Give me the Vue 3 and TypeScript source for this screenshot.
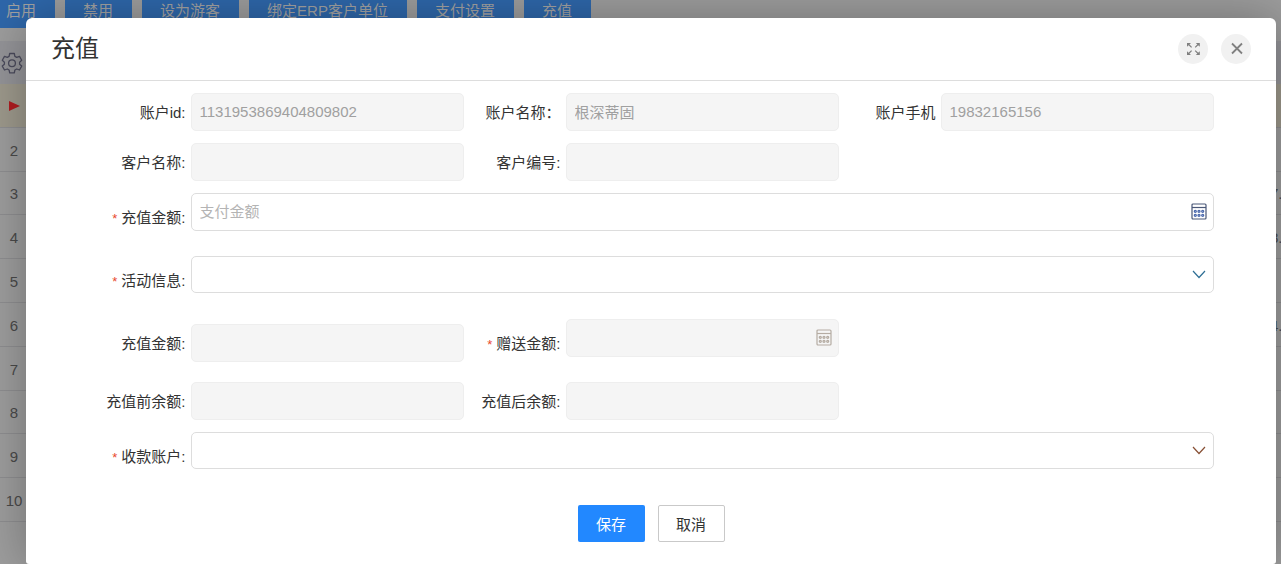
<script setup lang="ts">
import { reactive } from 'vue'

interface LedgerRow {
  index: number
  tail: string
}

const actions: string[] = ['启用', '禁用', '设为游客', '绑定ERP客户单位', '支付设置', '充值']

const tails: Record<number, string> = { 3: '7.', 4: '8.', 6: '4.' }

const rows: LedgerRow[] = [1, 2, 3, 4, 5, 6, 7, 8, 9, 10].map((index) => ({
  index,
  tail: tails[index] ?? '',
}))

const form = reactive({
  accountId: '1131953869404809802',
  accountName: '根深蒂固',
  phone: '19832165156',
  customerName: '',
  customerCode: '',
  payAmount: '',
  activity: '',
  rechargeAmount: '',
  giftAmount: '',
  balanceBefore: '',
  balanceAfter: '',
  payee: '',
})
</script>

<template>
  <div class="screen">
    <div class="backdrop" aria-hidden="true">
      <div class="toolbar">
        <button v-for="name in actions" :key="name" type="button" class="action" tabindex="-1">{{ name }}</button>
      </div>
      <div class="ledger">
        <div class="ledger-head">
          <svg class="gear" viewBox="0 0 22 22">
            <path d="M8.7 1.5h4.6l.6 2.9 1.8 1 2.8-1 2.2 3.9-2.1 1.9v2l2.1 1.9-2.2 3.9-2.8-1-1.8 1-.6 2.8H8.7l-.6-2.8-1.8-1-2.8 1-2.2-3.9 2.1-1.9v-2L1.3 8.3l2.2-3.9 2.8 1 1.8-1z" />
            <circle cx="11" cy="11.2" r="3.4" />
          </svg>
        </div>
        <div class="ledger-body">
          <div v-for="row in rows" :key="row.index" class="ledger-row" :class="{ current: row.index === 1 }">
            <span class="row-mark">
              <svg v-if="row.index === 1" class="pointer" viewBox="0 0 11 10"><path d="M0 0l11 5-11 5z" /></svg>
              <template v-else>{{ row.index }}</template>
            </span>
            <span class="row-tail">{{ row.tail }}</span>
          </div>
        </div>
      </div>
    </div>

    <section class="dialog" role="dialog" aria-labelledby="dialog-title">
      <header class="dialog-head">
        <h1 id="dialog-title">充值</h1>
        <div class="window-tools">
          <button type="button" class="round" aria-label="最大化">
            <svg class="tool-icon" viewBox="0 0 14 14">
              <path class="solid" d="M1 1h4L1 4.800zM13.800 1v3.800L9.800 1zM1 13V9.200L5 13zM13.800 13h-4l4-3.800z" />
              <path d="M2.200 2l3.400 3.400M12.600 2L9.200 5.400M2.200 12l3.400-3.400M12.600 12L9.200 8.600" />
            </svg>
          </button>
          <button type="button" class="round" aria-label="关闭">
            <svg class="tool-icon" viewBox="0 0 14 14"><path class="cross" d="M3 1.500l10 10M13 1.500l-10 10" /></svg>
          </button>
        </div>
      </header>

      <form class="form" @submit.prevent>
        <div class="row">
          <div class="cell">
            <label for="account-id">账户id:</label>
            <div class="control"><input id="account-id" v-model="form.accountId" type="text" disabled /></div>
          </div>
          <div class="cell">
            <label for="account-name">账户名称：</label>
            <div class="control"><input id="account-name" v-model="form.accountName" type="text" disabled /></div>
          </div>
          <div class="cell">
            <label for="phone">账户手机</label>
            <div class="control"><input id="phone" v-model="form.phone" type="text" disabled /></div>
          </div>
        </div>

        <div class="row">
          <div class="cell">
            <label for="customer-name">客户名称:</label>
            <div class="control"><input id="customer-name" v-model="form.customerName" type="text" disabled /></div>
          </div>
          <div class="cell">
            <label for="customer-code">客户编号:</label>
            <div class="control"><input id="customer-code" v-model="form.customerCode" type="text" disabled /></div>
          </div>
        </div>

        <div class="row">
          <div class="cell wide required">
            <label for="pay-amount"><i>*</i>充值金额:</label>
            <div class="control">
              <input id="pay-amount" v-model="form.payAmount" type="text" placeholder="支付金额" />
              <svg class="calc" viewBox="0 0 16 17">
                <rect x="1" y="1" width="14" height="15" rx="1" />
                <path d="M1 4.5h14" />
                <g class="keys">
                  <circle cx="4.300" cy="8.300" r="1" /><circle cx="8" cy="8.300" r="1" /><circle cx="11.700" cy="8.300" r="1" />
                  <circle cx="4.300" cy="12.300" r="1" /><circle cx="8" cy="12.300" r="1" /><circle cx="11.700" cy="12.300" r="1" />
                </g>
              </svg>
            </div>
          </div>
        </div>

        <div class="row spaced">
          <div class="cell wide required">
            <label for="activity"><i>*</i>活动信息:</label>
            <div class="control">
              <select id="activity" v-model="form.activity"><option value=""></option></select>
              <svg class="chevron" viewBox="0 0 14 9"><path d="M1 1l6 6.5L13 1" /></svg>
            </div>
          </div>
        </div>

        <div class="row spaced">
          <div class="cell low">
            <label for="recharge-amount">充值金额:</label>
            <div class="control"><input id="recharge-amount" v-model="form.rechargeAmount" type="text" disabled /></div>
          </div>
          <div class="cell required">
            <label for="gift-amount"><i>*</i>赠送金额:</label>
            <div class="control">
              <input id="gift-amount" v-model="form.giftAmount" type="text" disabled />
              <svg class="calc muted" viewBox="0 0 16 17">
                <rect x="1" y="1" width="14" height="15" rx="1" />
                <path d="M1 4.5h14" />
                <g class="keys">
                  <circle cx="4.300" cy="8.300" r="1" /><circle cx="8" cy="8.300" r="1" /><circle cx="11.700" cy="8.300" r="1" />
                  <circle cx="4.300" cy="12.300" r="1" /><circle cx="8" cy="12.300" r="1" /><circle cx="11.700" cy="12.300" r="1" />
                </g>
              </svg>
            </div>
          </div>
        </div>

        <div class="row spaced">
          <div class="cell">
            <label for="balance-before">充值前余额:</label>
            <div class="control"><input id="balance-before" v-model="form.balanceBefore" type="text" disabled /></div>
          </div>
          <div class="cell">
            <label for="balance-after">充值后余额:</label>
            <div class="control"><input id="balance-after" v-model="form.balanceAfter" type="text" disabled /></div>
          </div>
        </div>

        <div class="row">
          <div class="cell wide required">
            <label for="payee"><i>*</i>收款账户:</label>
            <div class="control">
              <select id="payee" v-model="form.payee"><option value=""></option></select>
              <svg class="chevron warm" viewBox="0 0 14 9"><path d="M1 1l6 6.5L13 1" /></svg>
            </div>
          </div>
        </div>

        <div class="buttons">
          <button type="submit" class="save">保存</button>
          <button type="button" class="cancel">取消</button>
        </div>
      </form>
    </section>
  </div>
</template>

<style>
body {
  margin: 0;
  overflow: hidden;
}
</style>

<style scoped>
.screen {
  position: relative;
  height: 100vh;
  overflow: hidden;
  background: #9d9d9d;
  font-family: "Liberation Sans", "Noto Sans CJK SC", sans-serif;
  font-size: 15px;
  color: #333;
}
button,
input,
select {
  box-sizing: border-box;
  font: inherit;
}
.backdrop {
  position: absolute;
  inset: 0;
}
.toolbar {
  display: flex;
  gap: 10px;
  height: 28px;
  margin-left: -12px;
}
.action {
  flex: none;
  height: 28px;
  padding: 0 19px 6px 18px;
  border: 0;
  background: #2e67aa;
  color: #a3a3a3;
  line-height: 22px;
}
.ledger {
  margin-top: 13px;
}
.ledger-head {
  display: flex;
  align-items: center;
  height: 43px;
  background: #949498;
}
.gear {
  width: 22px;
  height: 22px;
  margin-left: 1px;
  fill: none;
  stroke: #4b4b5c;
  stroke-width: 1.3;
  stroke-linejoin: round;
}
.ledger-body {
  display: grid;
  grid-template-rows: repeat(10, 1fr);
  height: 438px;
}
.ledger-row {
  display: flex;
  align-items: center;
  justify-content: space-between;
  padding-top: 2px;
  border-bottom: 1px solid #8e8e90;
  color: #4a4a4a;
}
.ledger-row.current {
  background: #9d998c;
}
.row-mark {
  width: 28px;
  text-align: center;
}
.row-tail {
  width: 11px;
  white-space: nowrap;
}
.pointer {
  display: block;
  width: 11px;
  height: 10px;
  margin-left: 9px;
  fill: #b01c20;
}
.dialog {
  position: absolute;
  top: 18px;
  right: 5px;
  bottom: 0;
  left: 26px;
  border-radius: 6px 6px 3px 3px;
  background: #fff;
  box-shadow: 1px 1px 50px rgba(0, 0, 0, 0.3);
}
.dialog-head {
  display: flex;
  align-items: center;
  justify-content: space-between;
  height: 62px;
  padding: 0 25px;
  border-bottom: 1px solid #ddd;
}
h1 {
  margin: 0;
  font-size: 24px;
  font-weight: 400;
  line-height: 32px;
}
.window-tools {
  display: flex;
  gap: 13px;
}
.round {
  display: flex;
  align-items: center;
  justify-content: center;
  width: 30px;
  height: 30px;
  padding: 0;
  border: 0;
  border-radius: 50%;
  background: #f1f1f1;
}
.tool-icon {
  width: 14px;
  height: 14px;
  fill: none;
  stroke: #808080;
  stroke-width: 1.2;
}
.tool-icon .solid {
  fill: #808080;
  stroke: none;
}
.tool-icon .cross {
  stroke-width: 1.8;
}
.form {
  display: flex;
  flex-direction: column;
  gap: 10px;
  padding: 12px 5% 0;
}
.row {
  display: grid;
  grid-template-columns: repeat(3, 1fr);
  align-items: start;
}
.row.spaced {
  margin-top: 8px;
}
.cell {
  display: flex;
  align-items: flex-start;
  gap: 5px;
}
.cell.wide {
  grid-column: 1 / -1;
}
.cell.low {
  margin-top: 5px;
}
label {
  flex: none;
  width: 97px;
  line-height: 40px;
  text-align: right;
  white-space: nowrap;
}
.required label {
  padding-top: 5px;
}
label i {
  margin-right: 4px;
  color: #e8472b;
  font-size: 13px;
  font-style: normal;
  line-height: 1;
}
.control {
  position: relative;
  flex: 1;
  min-width: 0;
}
input,
select {
  display: block;
  width: 100%;
  height: 38px;
  padding: 0 8px 2px;
  border: 1px solid #ddd;
  border-radius: 5px;
  outline: 0;
  background: #fff;
  color: #333;
}
select {
  height: 37px;
  appearance: none;
}
input:disabled {
  border-color: #eee;
  background: #f5f5f5;
  color: #a0a0a0;
}
input::placeholder {
  color: #b4b4b4;
  opacity: 1;
}
.calc,
.chevron {
  position: absolute;
  pointer-events: none;
  fill: none;
}
.calc {
  top: 10px;
  right: 7px;
  width: 16px;
  height: 17px;
  stroke: #4a5878;
  stroke-width: 1.2;
}
.calc .keys {
  stroke: #4b69ad;
  stroke-width: 1.3;
}
.calc.muted,
.calc.muted .keys {
  stroke: #b5aca3;
}
.chevron {
  top: 14px;
  right: 8px;
  width: 14px;
  height: 9px;
  stroke: #2f6f95;
  stroke-width: 1.2;
}
.chevron.warm {
  stroke: #885035;
}
.buttons {
  display: flex;
  justify-content: center;
  gap: 13px;
  margin-top: 18px;
}
.save,
.cancel {
  min-width: 67px;
  height: 37px;
  padding: 0 16px 1px;
  border: 0;
  border-radius: 2px;
  background: #2288ff;
  color: #fff;
}
.cancel {
  border: 1px solid #c9c9c9;
  background: #fff;
  color: #333;
}
</style>
